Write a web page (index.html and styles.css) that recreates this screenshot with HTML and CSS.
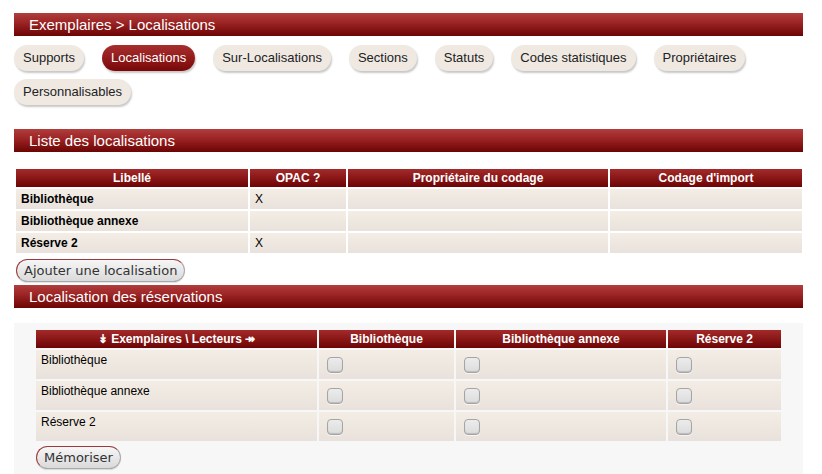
FILE: index.html
```html
<!DOCTYPE html>
<html lang="fr">
<head>
<meta charset="utf-8">
<title>Exemplaires &gt; Localisations</title>
<link rel="stylesheet" href="styles.css">
</head>
<body>
<div class="page">
  <h1 class="bar">Exemplaires &gt; Localisations</h1>
  <nav class="tabs">
    <a class="tab">Supports</a>
    <a class="tab active">Localisations</a>
    <a class="tab">Sur-Localisations</a>
    <a class="tab">Sections</a>
    <a class="tab">Statuts</a>
    <a class="tab">Codes statistiques</a>
    <a class="tab">Propriétaires</a>
    <a class="tab">Personnalisables</a>
  </nav>

  <h2 class="bar bar-list">Liste des localisations</h2>
  <table class="grid list">
    <colgroup><col class="c1"><col class="c2"><col class="c3"><col class="c4"></colgroup>
    <thead>
      <tr><th>Libellé</th><th>OPAC ?</th><th>Propriétaire du codage</th><th>Codage d'import</th></tr>
    </thead>
    <tbody>
      <tr><td class="lib">Bibliothèque</td><td>X</td><td></td><td></td></tr>
      <tr><td class="lib">Bibliothèque annexe</td><td></td><td></td><td></td></tr>
      <tr><td class="lib">Réserve 2</td><td>X</td><td></td><td></td></tr>
    </tbody>
  </table>
  <button class="btn btn-add" type="button">Ajouter une localisation</button>

  <h2 class="bar bar-resa">Localisation des réservations</h2>
  <div class="panel">
    <table class="grid resa">
      <colgroup><col class="r1"><col class="r2"><col class="r3"><col class="r4"></colgroup>
      <thead>
        <tr><th>↡ Exemplaires \ Lecteurs ↠</th><th>Bibliothèque</th><th>Bibliothèque annexe</th><th>Réserve 2</th></tr>
      </thead>
      <tbody>
        <tr><td class="name">Bibliothèque</td><td><input type="checkbox"></td><td><input type="checkbox"></td><td><input type="checkbox"></td></tr>
        <tr><td class="name">Bibliothèque annexe</td><td><input type="checkbox"></td><td><input type="checkbox"></td><td><input type="checkbox"></td></tr>
        <tr><td class="name">Réserve 2</td><td><input type="checkbox"></td><td><input type="checkbox"></td><td><input type="checkbox"></td></tr>
      </tbody>
    </table>
    <button class="btn btn-save" type="button">Mémoriser</button>
  </div>
</div>
</body>
</html>
```

FILE: styles.css
```css
html, body {
  margin: 0;
  padding: 0;
  background: #fff;
}
body {
  font-family: "Liberation Sans", Arial, sans-serif;
  color: #000;
}
.page {
  padding: 13px 19px 0 14px;
}
.bar {
  margin: 0;
  height: 23px;
  line-height: 23px;
  padding-left: 15px;
  font-size: 15px;
  font-weight: normal;
  color: #fff;
  background: linear-gradient(#b13d3d, #9a2222 45%, #6c0404);
}
.tabs {
  display: flex;
  flex-wrap: wrap;
  column-gap: 18px;
  row-gap: 8px;
  margin-top: 9px;
}
.tab {
  display: block;
  height: 26px;
  line-height: 26px;
  padding: 0 9px;
  font-size: 13px;
  color: #222;
  background: #efe9e2;
  border-radius: 13px;
  box-shadow: 1px 2px 2px rgba(0,0,0,0.22);
}
.tab.active {
  color: #fff;
  background: linear-gradient(#a82e2e, #7a0808);
}
.bar-list {
  margin-top: 24px;
}
.grid {
  border-collapse: separate;
  border-spacing: 2px;
  table-layout: fixed;
  font-size: 12px;
}
.grid th {
  height: 18px;
  padding: 0 4px;
  font-weight: bold;
  color: #fff;
  text-align: center;
  background: linear-gradient(#a42a2a, #6e0404);
}
.grid td {
  background: linear-gradient(#f4ede5, #e9e2dc);
  padding: 0 5px;
}
.list {
  margin-top: 15px;
  width: 790px;
}
.list .c1 { width: 232px; }
.list .c2 { width: 96px; }
.list .c3 { width: 260px; }
.list .c4 { width: 192px; }
.list td {
  height: 20px;
}
.list td.lib {
  font-weight: bold;
}
.btn {
  display: block;
  white-space: nowrap;
  font-family: "DejaVu Sans", sans-serif;
  font-size: 13px;
  line-height: 21px;
  color: #333;
  height: 23px;
  padding: 0 7px;
  border: 1px solid #a9a9a9;
  border-top-color: #9a3a3a;
  border-left-color: #9a3a3a;
  border-radius: 12px;
  background: linear-gradient(#f6f6f6, #dadada);
  box-shadow: 0 1px 1px rgba(0,0,0,0.12);
}
.btn-add {
  margin: 4px 0 3px 2px;
}
.panel {
  margin-top: 15px;
  background: #f7f7f7;
  padding: 5px 20px 10px 20px;
}
.resa {
  width: 749px;
}
.resa .r1 { width: 281px; }
.resa .r2 { width: 135px; }
.resa .r3 { width: 210px; }
.resa .r4 { width: 113px; }
.resa td {
  height: 29px;
  padding: 0 8px;
  vertical-align: top;
}
.resa td.name {
  padding: 3px 5px 0 5px;
  height: 26px;
}
.resa input[type="checkbox"] {
  appearance: none;
  -webkit-appearance: none;
  display: block;
  width: 16px;
  height: 16px;
  margin: 7px 0 0 0;
  border: 1px solid #a5a5a5;
  border-radius: 4px;
  background: linear-gradient(#ececec, #dcdcdc);
  box-shadow: inset 0 -1px 1px rgba(0,0,0,0.15), 0 1px 0 rgba(255,255,255,0.6);
}
.btn-save {
  margin: 3px 0 0 2px;
}
```
